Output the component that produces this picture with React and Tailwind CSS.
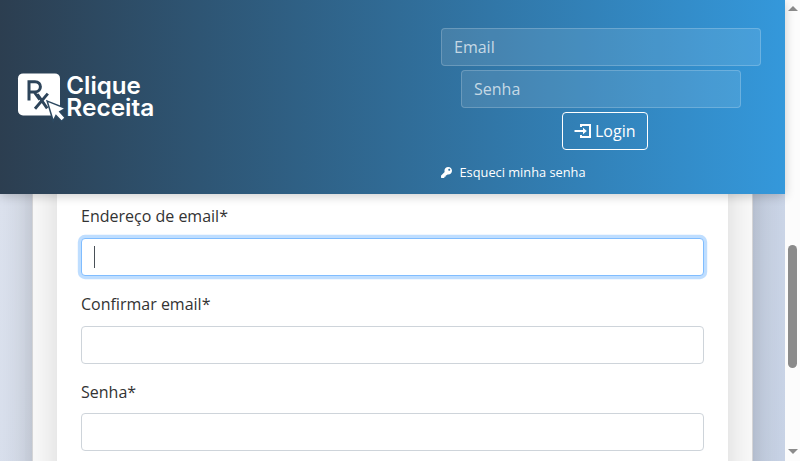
import { FaKey } from "react-icons/fa";

function Logo() {
  return (
    <svg width="140" height="54" viewBox="0 0 140 54" className="block" fill="#fff" fontFamily="Inter, 'Liberation Sans', sans-serif">
      <rect x="1" y="3.4" width="42" height="42" rx="5" />
      <g fill="none" stroke="#2d445a">
        <path d="M12 30.6V11.7h6c7.2 0 7.2 10.2 0 10.2h-6M17.2 21.9l5.6 7.6" strokeWidth="3" />
        <path d="M20.4 24.2l9.8 14.2M30.8 23.6L18 38.8" strokeWidth="2.9" />
      </g>
      <path d="M31.3 32.3l15.6 6.1-5.3 3 5.6 6.3-2.6 2.6-5.8-6-2.4 4.8z" stroke="#2d4961" strokeWidth="3" paintOrder="stroke" />
      <text x="49.3" y="24" fontSize="24" fontWeight="600" textLength="74.5" lengthAdjust="spacingAndGlyphs">Clique</text>
      <text x="49.3" y="46.3" fontSize="24" fontWeight="600" textLength="88" lengthAdjust="spacingAndGlyphs">Receita</text>
    </svg>
  );
}

function LoginIcon() {
  return (
    <svg width="18" height="16" viewBox="0 0 18 16" fill="none" stroke="#fff" strokeWidth="2">
      <path d="M7 4V2h9v12H7v-2" />
      <path d="M0.5 8h9" />
      <path d="M9 4.8L12.8 8 9 11.2z" fill="#fff" stroke="none" />
    </svg>
  );
}

function Header() {
  return (
    <header className="relative z-10 flex h-[194px] shrink-0 items-center justify-between bg-[linear-gradient(90deg,#2c3e50,#3498db)] pl-[17px] pr-6 shadow-[0_2px_10px_rgba(0,0,0,0.2)]">
      <Logo />
      <form className="flex h-[194px] w-80 flex-col items-center gap-1 pt-7">
        <input placeholder="Email" className="h-[38px] w-80 shrink-0 rounded border border-white/20 bg-white/10 px-3 placeholder:text-white/70" />
        <input placeholder="Senha" className="h-[38px] w-[280px] shrink-0 rounded border border-white/20 bg-white/10 px-3 placeholder:text-white/70" />
        <button type="button" className="ml-[8px] flex h-[38px] w-[86px] shrink-0 items-center gap-[3px] rounded border border-white pl-[11px] text-white">
          <LoginIcon />
          Login
        </button>
        <a className="mt-2 flex items-center gap-[7.5px] self-start text-[12.8px] leading-5 text-white">
          <FaKey size={11} />
          Esqueci minha senha
        </a>
      </form>
    </header>
  );
}

function Field({ label, focused }) {
  return (
    <div className="h-[87.6px]">
      <label className="mb-[9.8px] block leading-6 text-[#333]">{label}</label>
      <div
        className={
          focused
            ? "flex h-[38px] items-center rounded border border-[#80bdff] bg-white pl-3 shadow-[0_0_0_3.2px_rgba(0,123,255,0.25)]"
            : "h-[38px] rounded border border-[#ced4da] bg-white"
        }
      >
        {focused && <span className="h-[22px] w-px bg-[#495057]" />}
      </div>
    </div>
  );
}

function Scrollbar() {
  return (
    <div className="flex w-[15px] shrink-0 flex-col items-center bg-[#fcfcfc]">
      <svg width="10" height="5" className="mt-[6px]" fill="#8b8b8b"><path d="M0 5L5 0l5 5z" /></svg>
      <div className="mt-[234px] h-[123px] w-[9px] rounded-full bg-[#8b8b8b]" />
      <svg width="10" height="5" className="mt-[81px]" fill="#8b8b8b"><path d="M0 0h10L5 5z" /></svg>
    </div>
  );
}

export default function App() {
  return (
    <div className="flex h-[461px] w-[800px] overflow-hidden font-['Open_Sans','Noto_Sans',sans-serif] text-base">
      <div className="flex min-w-0 flex-1 flex-col">
        <Header />
        <main className="flex min-h-0 flex-1 justify-center overflow-hidden bg-[linear-gradient(120deg,#dce2ee,#c8d3e6)]">
          <div className="-my-12 w-[721px] shrink-0 border-x border-[#d6d6d8] bg-[#fafafa] px-6 shadow-[0_0_32px_rgba(0,0,0,0.2)]">
            <div className="h-[363px] bg-white px-6 pt-[58.4px] shadow-[0_0_32px_rgba(0,0,0,0.15)]">
              <Field label="Endereço de email*" focused />
              <Field label="Confirmar email*" />
              <Field label="Senha*" />
            </div>
          </div>
        </main>
      </div>
      <Scrollbar />
    </div>
  );
}
